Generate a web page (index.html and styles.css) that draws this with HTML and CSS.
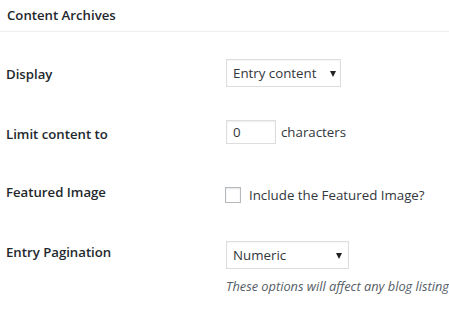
FILE: index.html
```html
<!DOCTYPE html>
<html>
<head>
    <meta charset="utf-8">
    <title>Content Archives</title>
    <link rel="stylesheet" href="styles.css">
</head>
<body>

<div class="postbox">
    <h2 class="box-title">Content Archives</h2>

    <div class="settings">
        <div class="row row-display">
            <label class="row-label" for="contentArchive">Display</label>
            <div class="row-field">
                <span class="select-wrap select-short">
                    <select id="contentArchive" class="select">
                        <option>Entry content</option>
                        <option>Entry excerpts</option>
                    </select>
                </span>
            </div>
        </div>

        <div class="row row-limit">
            <label class="row-label" for="contentLimit">Limit content to</label>
            <div class="row-field inline-field">
                <input id="contentLimit" class="text-input" type="text" value="0" />
                <span class="field-note">characters</span>
            </div>
        </div>

        <div class="row row-image">
            <div class="row-label">Featured Image</div>
            <div class="row-field inline-field check-field">
                <input id="featuredImage" class="checkbox" type="checkbox" />
                <label class="field-note" for="featuredImage">Include the Featured Image?</label>
            </div>
        </div>

        <div class="row row-paging">
            <label class="row-label" for="postsNav">Entry Pagination</label>
            <div class="row-field">
                <span class="select-wrap select-long">
                    <select id="postsNav" class="select">
                        <option>Numeric</option>
                        <option>Previous / Next</option>
                        <option>Older / Newer</option>
                    </select>
                </span>
                <p class="description">These options will affect any blog listing</p>
            </div>
        </div>
    </div>
</div>

</body>
</html>
```

FILE: styles.css
```css
body {
    margin: 0;
    background-color: #fff;
    color: #23282d;
    font-family: "Open Sans", "Noto Sans", sans-serif;
    font-size: 13px;
    overflow: hidden;
}
.postbox {
    width: 449px;
}
.box-title {
    margin: 0;
    height: 31px;
    padding: 0 7px;
    font-size: 13.2px;
    font-weight: 600;
    line-height: 30px;
    border-bottom: 1px solid #eee;
}
.row {
    display: flex;
    align-items: flex-start;
}
.row-label {
    width: 220px;
    padding-left: 6px;
    flex-shrink: 0;
    font-size: 13.2px;
    font-weight: 600;
    line-height: 20px;
}
.row-field {
    flex: 1;
    min-width: 0;
    color: #32373c;
    font-size: 13.3px;
    line-height: 20px;
}
.row-display {
    padding-top: 27px;
}
.row-display .row-label {
    margin-top: 5px;
}
.row-limit {
    padding-top: 33px;
}
.row-limit .row-label {
    margin-top: 4px;
}
.row-image {
    padding-top: 38px;
}
.row-image .row-field {
    margin-top: 3px;
}
.row-paging {
    padding-top: 36px;
}
.row-paging .row-label {
    margin-top: 1px;
}

/* selects drawn flat, arrow added by the wrapper */
.select-wrap {
    position: relative;
    display: block;
}
.select-wrap::after {
    content: "";
    position: absolute;
    top: 12px;
    border-left: 3px solid transparent;
    border-right: 3px solid transparent;
    border-top: 6px solid #222;
    pointer-events: none;
}
.select {
    display: block;
    box-sizing: border-box;
    height: 28px;
    margin: 0;
    padding: 0 6px;
    border: 1px solid #ddd;
    background-color: #fff;
    color: #32373c;
    font-family: inherit;
    font-size: 13.3px;
    -webkit-appearance: none;
    appearance: none;
    box-shadow: inset 0 1px 2px rgba(0, 0, 0, 0.04);
}
.select-short .select {
    width: 115px;
}
.select-short::after {
    left: 104px;
}
.select-long .select {
    width: 123px;
}
.select-long::after {
    left: 110px;
}

.inline-field {
    display: flex;
    align-items: center;
}
.text-input {
    box-sizing: border-box;
    width: 50px;
    height: 24px;
    margin: 0 5px 0 0;
    padding: 0 6px;
    border: 1px solid #ddd;
    color: #32373c;
    font-family: inherit;
    font-size: 13.3px;
    box-shadow: inset 0 1px 2px rgba(0, 0, 0, 0.07);
}
.checkbox {
    box-sizing: border-box;
    width: 16px;
    height: 16px;
    margin: 0 8px 0 -1px;
    border: 1px solid #b4b9be;
    background-color: #fff;
    -webkit-appearance: none;
    appearance: none;
    box-shadow: inset 0 1px 2px rgba(0, 0, 0, 0.1);
}
.description {
    margin: 7px 0 0;
    color: #555d66;
    font-style: italic;
    font-size: 12.8px;
    white-space: nowrap;
}
```
